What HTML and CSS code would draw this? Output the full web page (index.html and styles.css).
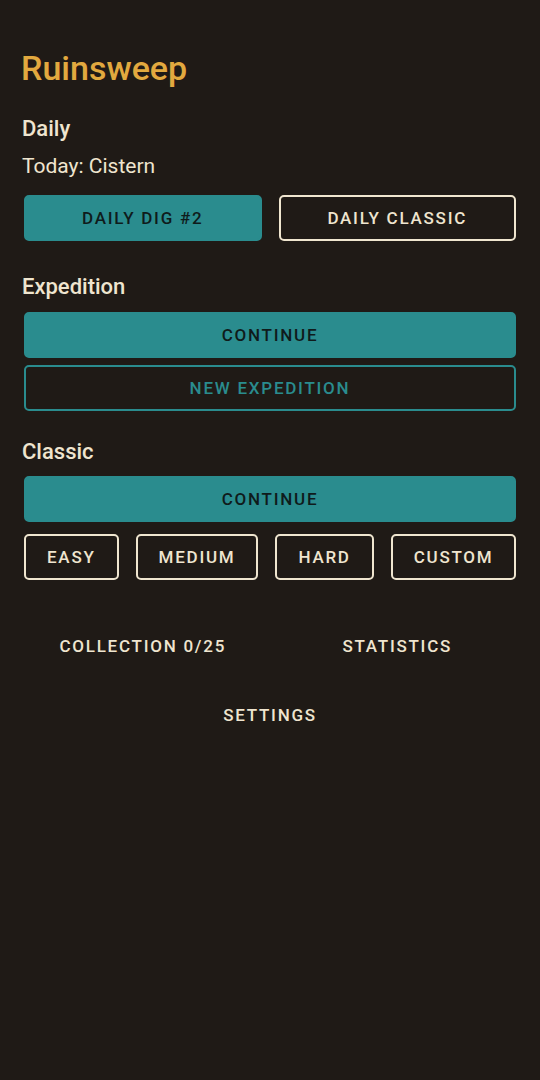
FILE: index.html
```html
<!DOCTYPE html>
<html lang="en">
<head>
    <meta charset="UTF-8">
    <meta name="viewport" content="width=device-width, initial-scale=1.0">
    <title>Ruinsweep</title>
    <link rel="stylesheet" href="styles.css">
</head>
<body>
    <div class="screen">
        <h1 class="title">Ruinsweep</h1>

        <h2 class="section section-daily">Daily</h2>
        <p class="today">Today: Cistern</p>
        <div class="row row-daily">
            <button class="btn btn-fill">Daily Dig #2</button>
            <button class="btn btn-line">Daily Classic</button>
        </div>

        <h2 class="section section-exp">Expedition</h2>
        <div class="stack">
            <button class="btn btn-fill">Continue</button>
            <button class="btn btn-teal">New Expedition</button>
        </div>

        <h2 class="section section-classic">Classic</h2>
        <div class="stack stack-classic">
            <button class="btn btn-fill">Continue</button>
            <div class="row row-diff">
                <button class="btn btn-line btn-small">Easy</button>
                <button class="btn btn-line btn-small">Medium</button>
                <button class="btn btn-line btn-small">Hard</button>
                <button class="btn btn-line btn-small">Custom</button>
            </div>
        </div>

        <div class="row row-links">
            <button class="btn btn-text">Collection 0/25</button>
            <button class="btn btn-text">Statistics</button>
        </div>
        <div class="row row-settings">
            <button class="btn btn-text">Settings</button>
        </div>
    </div>
</body>
</html>
```

FILE: styles.css
```css
body{
    margin: 0;
    background-color: #1f1a16;
    font-family: Roboto, "Liberation Sans", sans-serif;
    color: #efe5cf;
}

.screen{
    width: 540px;
    min-height: 1080px;
    box-sizing: border-box;
    padding: 48px 0 0;
}

.title{
    margin: 0;
    padding: 0 21px;
    font-size: 34px;
    line-height: 40px;
    font-weight: 500;
    color: #e2a93f;
}

.section{
    margin: 0;
    padding: 0 22px;
    font-size: 22px;
    line-height: 28px;
    font-weight: 500;
}
.section-daily{
    margin-top: 27px;
}
.section-exp{
    margin-top: 32px;
}
.section-classic{
    margin-top: 27px;
}

.today{
    margin: 10px 0 0;
    padding: 0 22px;
    font-size: 21px;
    line-height: 26px;
}

.row{
    display: flex;
    gap: 17px;
    padding: 0 24px;
}
.row-daily{
    margin-top: 16px;
}
.row-daily .btn{
    flex: 1;
}

.stack{
    display: flex;
    flex-direction: column;
    gap: 7px;
    padding: 0 24px;
    margin-top: 11px;
}
.stack-classic{
    margin-top: 10px;
    gap: 12px;
}

/* 难度按钮按内容宽度，两端对齐 */
.row-diff{
    padding: 0;
    justify-content: space-between;
}

.btn{
    height: 46px;
    box-sizing: border-box;
    border: 2px solid transparent;
    border-radius: 5px;
    background: none;
    font-family: inherit;
    font-size: 17px;
    line-height: 20px;
    font-weight: 500;
    letter-spacing: 1.75px;
    text-transform: uppercase;
    color: #efe5cf;
    padding: 0 20px;
}

.btn-fill{
    background-color: #2a8c8e;
    border-color: #2a8c8e;
    color: #0f1b1b;
}
.btn-line{
    border-color: #efe5cf;
}
.btn-teal{
    border-color: #2a8c8e;
    color: #2a8c8e;
}
.btn-small{
    padding: 0 21px;
}

.btn-text{
    flex: 1;
}
.row-links{
    margin-top: 43px;
}
.row-settings{
    margin-top: 23px;
    justify-content: center;
}
.row-settings .btn-text{
    flex: none;
}
```
